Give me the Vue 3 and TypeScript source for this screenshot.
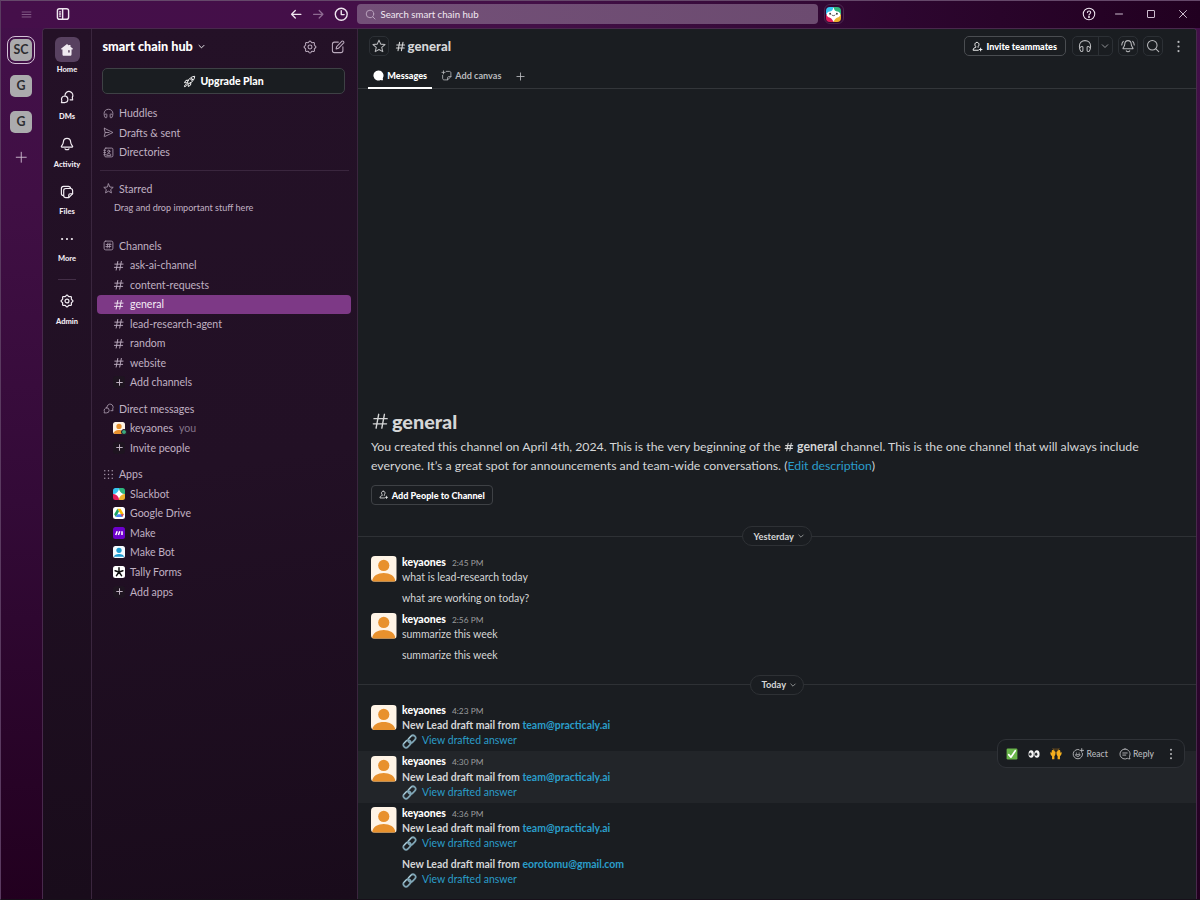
<script setup lang="ts">
import { h } from 'vue'
import type { FunctionalComponent } from 'vue'

/* Scalloped outline shared by both settings gears */
function gearPath(): string {
  const pts: string[] = []
  for (let i = 0; i <= 96; i++) {
    const a = (i / 96) * Math.PI * 2
    const r = 7.6 + 0.85 * Math.cos(a * 8)
    pts.push(`${(10 + r * Math.sin(a)).toFixed(2)} ${(10 - r * Math.cos(a)).toFixed(2)}`)
  }
  return 'M' + pts.join('L') + 'Z'
}

const palm = 'M.5 7.500c.8-.8 1.500-.2 1.900.8l.7-4.100c.3-1 1.500-.8 1.500.1l.1-1c.3-1 1.600-.7 1.600.3l.1.900c.4-.8 1.500-.5 1.500.4l.2 1.200c.5-.5 1.200-.1 1.200.7 0 4.200-.7 5.700-2 7v5H3.400v-5C1.700 12.500.4 10 .5 7.500Z'

const icons: Record<string, string> = {
  menu: '<path d="M2 5.500h16M2 10h16M2 14.500h16"/>',
  panel: '<rect x="2" y="2.500" width="16" height="15" rx="3"/><path d="M9.500 3v14" stroke-width="2"/><path d="M5 7h1.500M5 10h1.500M5 13h1.500"/>',
  back: '<path d="M17.5 10h-15M8.5 4 2.5 10l6 6"/>',
  forward: '<path d="M2.500 10h15M11.500 4l6 6-6 6"/>',
  clock: '<circle cx="10" cy="10" r="8.2"/><path d="M10 5v5.500h4"/>',
  search: '<circle cx="9" cy="9" r="6.800"/><path d="m14 14 4.200 4.200"/>',
  help: '<circle cx="10" cy="10" r="8.200"/><path d="M7.700 8c.2-3 4.800-2.900 4.700-.1 0 1.800-2.400 1.900-2.400 3.700"/><circle cx="10" cy="14.300" r=".6" fill="currentColor"/>',
  minimize: '<path d="M3 10h14"/>',
  maximize: '<rect x="3" y="3" width="14" height="14" rx="1"/>',
  close: '<path d="M3 3l14 14M17 3 3 17"/>',
  plus: '<path d="M10 2v16M2 10h16"/>',
  home: '<path d="M10 1.500 1.800 8c-.5.400-.2 1.300.4 1.300H3.500V16c0 1.400.8 2.200 2.200 2.200h8.600c1.400 0 2.200-.8 2.200-2.200V9.300h1.300c.6 0 .9-.9.400-1.300L15 5.400V3h-2.400v.6z" fill="currentColor" stroke="none"/><path d="M12.800 11v2" stroke="#4b3450" stroke-width="1.900"/>',
  dms: '<path d="M7.200 7.600a5.600 5.600 0 1 1 10.400 2.900l.5 3.500h-3.700"/><path d="M6.600 8.600a4.700 4.700 0 1 1-.1 9.400H2l.6-2.600a4.700 4.700 0 0 1 4-6.800Z"/>',
  bell: '<path d="M10 2c3.300 0 5 2.300 5.200 5.200.1 2.900 1.800 4.300 2.800 6.100.2.600 0 1.100-.6 1.100H2.600c-.6 0-.8-.5-.6-1.100 1-1.800 2.700-3.200 2.800-6.100C5 4.300 6.700 2 10 2Z"/><path d="M7.200 16.800c1.400 1.800 4.200 1.800 5.600 0"/>',
  files: '<path d="M5 15.200C3 15 2 14 2 12V5c0-2 1-3 3-3h7c2 0 3 1 3.200 3"/><path d="M8.300 5h6.700c2 0 3 1 3 3v4.500L12.500 18H8.300c-2 0-3-1-3-3V8c0-2 1-3 3-3Z"/><path d="M12.500 17.800v-3.300c0-1.300.7-2 2-2H18"/>',
  more: '<g fill="currentColor" stroke="none"><circle cx="3" cy="10" r="1.600"/><circle cx="10" cy="10" r="1.600"/><circle cx="17" cy="10" r="1.600"/></g>',
  kebab: '<g fill="currentColor" stroke="none"><circle cx="10" cy="3" r="1.700"/><circle cx="10" cy="10" r="1.700"/><circle cx="10" cy="17" r="1.700"/></g>',
  gear: `<path d="${gearPath()}"/><circle cx="10" cy="10" r="2.800"/>`,
  chevron: '<path d="m4.500 7.500 5.500 5.500 5.500-5.500"/>',
  compose: '<path d="M10.500 3H5C3 3 2 4 2 6v9c0 2 1 3 3 3h9c2 0 3-1 3-3V9.500"/><path d="m7.300 12.700.8-3.400L15.700 1.700c1.300-1 3.400 1 2.500 2.500l-7.600 7.600Z"/>',
  rocket: '<path d="M7 10.500C9 5.500 13 2.200 18 2c-.2 5-3.500 9-8.500 11Z"/><path d="M8 8 4.500 8.300 2.300 11.800l4.700.4M12 12l-.3 3.500-3.500 2.200-.5-4.700M5 14c-1.600.5-2.500 2-2.800 4 2-.3 3.500-1.200 4-2.800"/><circle cx="13.300" cy="6.700" r="1.300"/>',
  huddle: '<path d="M3.500 16.500C2.600 15 2 12.500 2 10.200 2 5.500 5.300 2.300 10 2.300s8 3.200 8 7.900c0 2.300-.6 4.800-1.500 6.300"/><path d="M3 12.500c1-2 4-2.500 4-.5v4.500c0 1.800-2.500 2-3.500.2M17 12.500c-1-2-4-2.500-4-.5v4.500c0 1.800 2.500 2 3.500.2"/>',
  send: '<path d="M3 2.500 18 10 3 17.500c-.7.200-1-.2-.8-.9L4 10 2.200 3.400c-.2-.7.100-1.100.8-.9Z"/><path d="M4 10h7"/>',
  directory: '<rect x="3" y="2" width="15" height="16" rx="2.200"/><circle cx="10.500" cy="7.800" r="2"/><path d="M6.800 14.500c.2-4.400 7.200-4.400 7.400 0Z"/><path d="M1.500 6h3M1.500 10h3M1.500 14h3"/>',
  star: '<path d="m10 1.600 2.500 5.700 6.100.6-4.700 4.100 1.500 6L10 14.900 4.600 18l1.500-6L1.400 7.900l6.100-.6Z"/>',
  hashbox: '<rect x="2" y="2" width="16" height="16" rx="3"/><path d="M9 5.500 7.500 14.500M12.800 5.500l-1.500 9M5.800 8.300h8.900M5.300 11.800h8.900"/>',
  hash: '<path d="M8.300 2.500 5.500 17.500M14.500 2.500l-2.800 15M3.200 7.200h14.300M2.500 12.800h14.300"/>',
  grid: '<g fill="currentColor" stroke="none"><rect x="2" y="2" width="2.300" height="2.300"/><rect x="8.850" y="2" width="2.300" height="2.300"/><rect x="15.700" y="2" width="2.300" height="2.300"/><rect x="2" y="8.850" width="2.300" height="2.300"/><rect x="8.850" y="8.850" width="2.300" height="2.300"/><rect x="15.700" y="8.850" width="2.300" height="2.300"/><rect x="2" y="15.700" width="2.300" height="2.300"/><rect x="8.850" y="15.700" width="2.300" height="2.300"/><rect x="15.700" y="15.700" width="2.300" height="2.300"/></g>',
  bubble: '<path d="M10 1a9 9 0 1 0 3.700 17.100c1.200.6 2.600.8 4.800.7-.6-1.400-.8-2.900-.6-4.300A9 9 0 0 0 10 1Z" fill="currentColor" stroke="none"/>',
  canvas: '<path d="M9.500 2.500H15c2 0 3 1 3 3V12l-6 6H6c-2 0-3-1-3-3v-5.500"/><path d="M12 17.800V14c0-1.300.7-2 2-2h4M4.500 1.500v5.500M1.700 4.300h5.600"/>',
  person: '<path d="M9 2.500c2.300 0 3.700 1.600 3.700 3.900 0 1.700-.7 3-1.600 3.800v1.300M9 2.500c-2.300 0-3.700 1.600-3.700 3.900 0 1.700.7 3 1.600 3.800v1.300C4.500 12.200 2 13 2 16.800h9.500M15.700 13v5M13.200 15.500h5"/>',
  alarm: '<path d="M10 2.300c3 0 4.400 2 4.600 4.800.1 2.700 1.500 4.100 2.500 6 .2.500 0 .9-.6.900h-13c-.6 0-.8-.4-.6-.9 1-1.900 2.400-3.300 2.500-6C5.600 4.300 7 2.300 10 2.300ZM7.500 17c1.200 1.500 3.800 1.500 5 0M3.300 3.300C1.900 4.700 1.200 6.500 1.100 8.500M16.700 3.300c1.400 1.400 2.100 3.200 2.200 5.200"/>',
  react: '<path d="M11.500 2.600a7.800 7.800 0 1 0 6 6.400"/><path d="M6 11.800c1.300 3.400 6 3.400 7.300 0ZM16.200 1v6M13.200 4h6"/><g fill="currentColor" stroke="none"><circle cx="7.300" cy="8.500" r="1"/><circle cx="11.900" cy="8.500" r="1"/></g>',
  reply: '<path d="M10 1.700a8.300 8.300 0 1 0 4 15.500c1 .6 2.300.9 4.300.8-.7-1.500-1-2.700-.7-4.300A8.300 8.300 0 0 0 10 1.700Z"/><path d="M6.300 8.300h7.400M6.300 11.800h5"/>',
  link: '<g transform="rotate(-45 10 10)"><g fill="none" stroke="#7fa5b5" stroke-width="2.300"><rect x="0" y="6.500" width="11" height="7" rx="3.500"/><rect x="9" y="6.500" width="11" height="7" rx="3.500"/></g><path d="M3 6.300h5M12 6.300h5" stroke="#c9dde5" stroke-width="1"/></g>',
  check: '<rect x="1" y="1" width="18" height="18" rx="2" fill="#69b54a" stroke="none"/><path d="m4.500 11 3.700 4.300L15.500 4.500" stroke="#fff" stroke-width="2.800"/>',
  eyes: '<g stroke="none"><ellipse cx="5.300" cy="10" rx="4.400" ry="6.300" fill="#f5f5f5"/><ellipse cx="14.900" cy="10" rx="4.400" ry="6.300" fill="#f5f5f5"/><ellipse cx="4" cy="10.300" rx="2" ry="2.800" fill="#26292d"/><ellipse cx="13.600" cy="10.300" rx="2" ry="2.800" fill="#26292d"/></g>',
  hands: `<path d="M8.300 3.500V1.200M11.700 3.500V1.200M5.800 2 5 .8M14.200 2l.8-1.200" stroke="#b87a1c" stroke-width="1"/><g stroke="none" fill="#f4ae1d"><path d="${palm}"/><path transform="matrix(-1 0 0 1 20 0)" d="${palm}"/></g>`,
  user: '<g stroke="none"><rect width="20" height="20" fill="#fff4e6"/><circle cx="10" cy="7.400" r="4.400" fill="#e8912d"/><path d="M.9 20c.3-8.800 17.900-8.800 18.200 0Z" fill="#e8912d"/></g>',
  makebot: '<g stroke="none"><rect width="20" height="20" fill="#f4fbff"/><circle cx="10" cy="7.200" r="4.400" fill="#1c9bd1"/><path d="M1.500 18c0-6.500 17-6.500 17 0Z" fill="#1c9bd1"/></g>',
  slackbot: '<g stroke="none"><path d="M0 0h10v10H0z" fill="#36c5f0"/><path d="M10 0h10v10H10z" fill="#2eb67d"/><path d="M0 10h10v10H0z" fill="#e01e5a"/><path d="M10 10h10v10H10z" fill="#ecb22e"/><path d="M10 1.500c1 4.500 3.800 7.300 8.500 8.500-4.700 1.200-7.500 4-8.500 8.500C9 14 6.200 11.200 1.500 10 6.200 8.800 9 6 10 1.500Z" fill="#fff"/></g>',
  slackface: '<g stroke="none"><path d="M0 0h10v10H0z" fill="#36c5f0"/><path d="M10 0h10v10H10z" fill="#2eb67d"/><path d="M0 10h10v10H0z" fill="#e01e5a"/><path d="M10 10h10v10H10z" fill="#ecb22e"/><path d="M10 0c.8 3 1.600 5.300 3.500 5.800C16 6 17.500 6.500 19 8.800v2.400c-1.500 2.200-3 2.600-5 3.300-2 1-3 3-4 5.500-1-2.500-2-4.500-4-5.500-2-.7-3.500-1.100-5-3.300V8.800C2.500 6.500 4 6 6.500 5.800 8.400 5.300 9.200 3 10 0Z" fill="#fff"/><circle cx="5.500" cy="9" r="1.200" fill="#333"/><circle cx="14.500" cy="9" r="1.200" fill="#333"/></g><path d="M8 10.800c1 1.100 3 1.100 4 0" stroke="#333" stroke-width="1.100"/>',
  drive: '<g stroke="none"><rect width="20" height="20" fill="#fff"/><path d="M7.300 3h5.400l5.300 9h-5Z" fill="#fbbc04"/><path d="M7.300 3 2 12l2.700 4.700L10 7.500Z" fill="#1ea362"/><path d="M7.300 12H18l-2.700 4.700H4.700Z" fill="#4285f4"/><path d="m15.300 16.700 2.700-4.700h-5Z" fill="#ea4335"/></g>',
  make: '<rect width="20" height="20" fill="#6d00cc" stroke="none"/><path d="M4.500 13.500 7 7M9 13.500 11.300 7M15 13.500V7" stroke="#fff" stroke-width="2.500" stroke-linecap="butt"/>',
  tally: '<rect width="20" height="20" fill="#fff" stroke="none"/><path d="M10 10V3M10 10l6.500-2.200M10 10l4.200 6M10 10l-4.200 6M10 10 3.500 7.800" stroke="#111" stroke-width="2.500"/>',
}

const Icon: FunctionalComponent<{ name: string }> = (props) =>
  h('svg', { viewBox: '0 0 20 20', 'aria-hidden': 'true', innerHTML: icons[props.name] })
Icon.props = ['name']

interface NavItem { label: string; icon: string; active?: boolean }
const navItems: NavItem[] = [
  { label: 'Home', icon: 'home', active: true },
  { label: 'DMs', icon: 'dms' },
  { label: 'Activity', icon: 'bell' },
  { label: 'Files', icon: 'files' },
  { label: 'More', icon: 'more' },
]

interface Entry { label: string; icon: string; kind: 'glyph' | 'add' | 'tile'; active?: boolean; you?: boolean }
interface Section { title: string; icon: string; key: string; entries: Entry[] }

const shortcuts = [
  { label: 'Huddles', icon: 'huddle' },
  { label: 'Drafts & sent', icon: 'send' },
  { label: 'Directories', icon: 'directory' },
]

const channels = ['ask-ai-channel', 'content-requests', 'general', 'lead-research-agent', 'random', 'website']
const sections: Section[] = [
  {
    title: 'Channels', icon: 'hashbox', key: 'channels',
    entries: [
      ...channels.map((label): Entry => ({ label, icon: 'hash', kind: 'glyph', active: label === 'general' })),
      { label: 'Add channels', icon: 'plus', kind: 'add' },
    ],
  },
  {
    title: 'Direct messages', icon: 'dms', key: 'dms',
    entries: [
      { label: 'keyaones', icon: 'user', kind: 'tile', you: true },
      { label: 'Invite people', icon: 'plus', kind: 'add' },
    ],
  },
  {
    title: 'Apps', icon: 'grid', key: 'apps',
    entries: [
      { label: 'Slackbot', icon: 'slackbot', kind: 'tile' },
      { label: 'Google Drive', icon: 'drive', kind: 'tile' },
      { label: 'Make', icon: 'make', kind: 'tile' },
      { label: 'Make Bot', icon: 'makebot', kind: 'tile' },
      { label: 'Tally Forms', icon: 'tally', kind: 'tile' },
      { label: 'Add apps', icon: 'plus', kind: 'add' },
    ],
  },
]

interface Message { id: number; time?: string; text?: string; lead?: string; hovered?: boolean }
interface Day { label: string; messages: Message[] }
const days: Day[] = [
  {
    label: 'Yesterday',
    messages: [
      { id: 1, time: '2:45 PM', text: 'what is lead-research today' },
      { id: 2, text: 'what are working on today?' },
      { id: 3, time: '2:56 PM', text: 'summarize this week' },
      { id: 4, text: 'summarize this week' },
    ],
  },
  {
    label: 'Today',
    messages: [
      { id: 5, time: '4:23 PM', lead: 'team@practicaly.ai' },
      { id: 6, time: '4:30 PM', lead: 'team@practicaly.ai', hovered: true },
      { id: 7, time: '4:36 PM', lead: 'team@practicaly.ai' },
      { id: 8, lead: 'eorotomu@gmail.com' },
    ],
  },
]
</script>

<template>
  <div class="window">
    <header class="titlebar">
      <div class="tb-left">
        <Icon name="menu" class="i-menu" />
        <Icon name="panel" class="i-panel" />
      </div>
      <div class="tb-history">
        <Icon name="back" class="i-arrow" />
        <Icon name="forward" class="i-arrow dim" />
        <Icon name="clock" class="i-clock" />
      </div>
      <div class="searchbar"><Icon name="search" class="i-search" /><span>Search smart chain hub</span></div>
      <div class="bot"><Icon name="slackface" class="i-bot" /></div>
      <div class="tb-right">
        <Icon name="help" class="i-help" />
        <Icon name="minimize" class="i-win" />
        <Icon name="maximize" class="i-win" />
        <Icon name="close" class="i-win" />
      </div>
    </header>

    <div class="body">
      <aside class="workspaces">
        <div class="ws current"><span>SC</span></div>
        <div class="ws"><span>G</span></div>
        <div class="ws"><span>G</span></div>
        <Icon name="plus" class="i-addws" />
      </aside>

      <div class="client">
        <nav class="nav">
          <div v-for="item in navItems" :key="item.label" class="nav-item" :class="{ active: item.active }">
            <div class="nav-icon"><Icon :name="item.icon" class="i-nav" /></div>
            <span>{{ item.label }}</span>
          </div>
          <hr class="nav-rule" />
          <div class="nav-item">
            <div class="nav-icon"><Icon name="gear" class="i-nav" /></div>
            <span>Admin</span>
          </div>
        </nav>

        <aside class="sidebar">
          <div class="side-head">
            <strong>smart chain hub</strong>
            <Icon name="chevron" class="i-chev" />
            <Icon name="gear" class="i-head push" />
            <Icon name="compose" class="i-head" />
          </div>
          <button class="upgrade"><Icon name="rocket" class="i-rocket" />Upgrade Plan</button>
          <div class="shortcuts">
            <div v-for="s in shortcuts" :key="s.label" class="row top"><Icon :name="s.icon" class="i-row" /><span>{{ s.label }}</span></div>
          </div>
          <div class="starred">
            <div class="row top"><Icon name="star" class="i-row" /><span>Starred</span></div>
            <p>Drag and drop important stuff here</p>
          </div>
          <section v-for="sec in sections" :key="sec.key" class="section">
            <div class="row top"><Icon :name="sec.icon" class="i-row" /><span>{{ sec.title }}</span></div>
            <div v-for="e in sec.entries" :key="e.label" class="row entry" :class="{ active: e.active }">
              <span class="slot" :class="e.kind">
                <Icon :name="e.icon" />
                <i v-if="e.you" class="presence"></i>
              </span>
              <span>{{ e.label }}</span>
              <span v-if="e.you" class="you">you</span>
            </div>
          </section>
        </aside>

        <main class="main">
          <div class="chan-head">
            <div class="sq star"><Icon name="star" class="i-sq" /></div>
            <h1><Icon name="hash" class="i-hash" />general</h1>
            <div class="actions">
              <button class="invite"><Icon name="person" class="i-person" />Invite teammates</button>
              <div class="split">
                <span><Icon name="huddle" class="i-sq" /></span>
                <span><Icon name="chevron" class="i-split" /></span>
              </div>
              <div class="sq"><Icon name="alarm" class="i-sq" /></div>
              <div class="sq last"><Icon name="search" class="i-sq" /></div>
              <Icon name="kebab" class="i-kebab" />
            </div>
          </div>
          <div class="tabs">
            <div class="tab on"><Icon name="bubble" class="i-tab" />Messages</div>
            <div class="tab"><Icon name="canvas" class="i-tab" />Add canvas</div>
            <Icon name="plus" class="i-plus" />
          </div>

          <div class="stream">
            <div class="intro">
              <h2><Icon name="hash" class="i-bighash" />general</h2>
              <p>You created this channel on April 4th, 2024. This is the very beginning of the <b><Icon name="hash" class="i-inhash" /> general</b> channel. This is the one channel that will always include<br />everyone. It’s a great spot for announcements and team-wide conversations. (<a>Edit description</a>)</p>
              <button><Icon name="person" class="i-addperson" />Add People to Channel</button>
            </div>

            <section v-for="day in days" :key="day.label" class="day">
              <div class="divider"><span>{{ day.label }}<Icon name="chevron" class="i-day" /></span></div>
              <article v-for="m in day.messages" :key="m.id" class="msg" :class="{ hovered: m.hovered }">
                <div class="gutter"><Icon v-if="m.time" name="user" class="avatar" /></div>
                <div class="content">
                  <div v-if="m.time" class="line"><b class="author">keyaones</b><time>{{ m.time }}</time></div>
                  <div v-if="m.text" class="line">{{ m.text }}</div>
                  <template v-if="m.lead">
                    <div class="line"><b>New Lead draft mail from <a>{{ m.lead }}</a></b></div>
                    <div class="line linkline"><Icon name="link" class="i-link" /><a>View drafted answer</a></div>
                  </template>
                </div>
                <div v-if="m.hovered" class="toolbar">
                  <Icon name="check" class="i-emoji" />
                  <Icon name="eyes" class="i-emoji" />
                  <Icon name="hands" class="i-emoji" />
                  <span class="act react"><Icon name="react" class="i-act" />React</span>
                  <span class="act"><Icon name="reply" class="i-act" />Reply</span>
                  <Icon name="kebab" class="i-tbkebab" />
                </div>
              </article>
            </section>
          </div>
        </main>
      </div>
    </div>
  </div>
</template>

<style>
html, body { margin: 0; background: #1a1d21; overflow: hidden; }
</style>

<style scoped>
* { box-sizing: border-box; }
svg { display: block; flex: none; fill: none; stroke: currentColor; stroke-width: 1.5; stroke-linecap: round; stroke-linejoin: round; }
button { font: inherit; color: inherit; margin: 0; padding: 0; display: flex; align-items: center; justify-content: center; }
h1, h2, p { margin: 0; }
a { color: #2a9dca; }

.window {
  width: 1200px; height: 900px; overflow: hidden; display: flex; flex-direction: column;
  font-family: Lato, "Liberation Sans", sans-serif; font-size: 10.5px; color: #d5d6d7;
  background: linear-gradient(180deg, #43104a 0, #400f44 200px, #330a37 500px, #22001f 900px);
  border-top: 1px solid #65486a; border-left: 1px solid #5a3a60; border-bottom: 1px solid #17101a;
}
.titlebar {
  height: 27px; flex: none; display: flex; align-items: center; padding-bottom: 1px;
  background: linear-gradient(90deg, #450f4a 0, #430f47 45%, #2d062f 75%, #210020 100%);
}
.tb-left { display: flex; align-items: center; width: 289px; padding-left: 20px; gap: 24px; }
.i-menu { width: 11px; height: 11px; color: #8e6a92; }
.i-panel { width: 14px; height: 14px; color: #efe6f0; stroke-width: 2; }
.tb-history { display: flex; align-items: center; gap: 9.5px; }
.i-arrow { width: 12.5px; height: 12.5px; color: #efe6f0; stroke-width: 2; }
.dim { color: #8e6a92; }
.i-clock { width: 14.5px; height: 14.5px; color: #efe6f0; stroke-width: 1.9; }
.searchbar {
  margin-left: 8px; width: 461px; height: 20px; border-radius: 4px; background: linear-gradient(90deg, #735078, #6c4b70);
  display: flex; align-items: center; gap: 5px; padding-left: 8px; color: #f1e9f2; font-size: 9.65px;
}
.i-search { width: 11px; height: 11px; color: #b9a2bc; stroke-width: 1.8; }
.bot { margin-left: 6px; width: 20px; height: 20px; border-radius: 6px; border: 1px solid #4c2750; display: grid; place-items: center; }
.i-bot { width: 15px; height: 15px; border-radius: 4px; }
.tb-right { margin-left: auto; display: flex; align-items: center; gap: 22px; padding-right: 12px; color: #cdbdcf; }
.i-help { width: 14px; height: 14px; color: #efe6f0; margin-right: -4px; }
.i-win { width: 10px; height: 10px; stroke-width: 2; }

.body { flex: 1; min-height: 0; display: flex; }
.workspaces { width: 41px; flex: none; display: flex; flex-direction: column; align-items: center; padding: 10.5px 1px 0 0; gap: 14px; }
.ws span { width: 22px; height: 22px; border-radius: 5px; background: #ababad; color: #2c2d30; display: grid; place-items: center; font-weight: 700; font-size: 12.4px; }
.ws.current { margin: -3px 0; padding: 2px; border: 1px solid #d3c0d6; border-radius: 8px; }
.i-addws { width: 12.5px; height: 12.5px; margin-top: 4.5px; color: #cbb9cd; }

.client { flex: 1; min-width: 0; display: flex; margin-right: 3px; border: 1px solid #48294c; border-width: 1px 1px 0 1px; border-radius: 4px 4px 0 0; overflow: hidden; background: #1a1d21; }
.nav { width: 49px; flex: none; background: linear-gradient(180deg, #241127 0, #211024 400px, #190c1b 100%); border-right: 1px solid #3a263e; display: flex; flex-direction: column; align-items: center; padding-top: 8px; color: #f0eaf1; }
.nav-item { height: 47.4px; display: flex; flex-direction: column; align-items: center; font-size: 7.5px; font-weight: 900; line-height: 10px; }
.nav-icon { width: 25px; height: 25px; border-radius: 6px; display: grid; place-items: center; margin-bottom: 2.8px; }
.active .nav-icon { background: #584160; }
.i-nav { width: 14px; height: 14px; stroke-width: 1.7; }
.nav-rule { width: 18px; height: 1px; border: 0; margin: 5.5px 0 8.5px; background: #432e47; }

.sidebar { width: 266px; flex: none; background: linear-gradient(172deg, #241127 0, #221025 50%, #190b1b 100%); border-right: 1px solid #3a263e; padding: 0 6px 0 5px; color: #c0b1c3; }
.side-head { height: 35px; display: flex; align-items: center; padding: 0 6px 0 5.5px; color: #fff; font-size: 12.7px; }
.side-head strong { font-weight: 900; margin-top: -1px; }
.i-chev { width: 9px; height: 9px; margin-left: 4px; stroke-width: 2; }
.i-head { width: 14px; height: 14px; color: #b9a9bc; margin-left: 14px; }
.i-head.push { margin-left: auto; }
.upgrade { margin: 4px 5px 0; width: 243px; height: 26px; background: #1a1d21; border: 1px solid #3e4145; border-radius: 5px; color: #fff; font-weight: 900; font-size: 10.5px; gap: 4px; }
.i-rocket { width: 13px; height: 13px; }
.shortcuts { padding-top: 9.5px; height: 77px; border-bottom: 1px solid #3a263e; margin: 0 2px 8px 3px; }
.shortcuts .row { margin-left: -3px; }
.row { height: 19.52px; display: flex; align-items: center; font-size: 10.55px; border-radius: 4px; white-space: nowrap; }
.row.top { padding-left: 5.5px; gap: 5.5px; }
.i-row { width: 11px; height: 11px; stroke-width: 1.6; color: #a797ab; }
.starred { height: 57px; }
.starred p { padding-left: 17px; line-height: 18px; font-size: 9.1px; }
.section { margin-bottom: 7px; }
.entry { padding-left: 16px; }
.slot { position: relative; width: 12px; height: 12px; margin-right: 5px; display: grid; place-items: center; }
.slot svg { width: 11.5px; height: 11.5px; stroke-width: 1.6; }
.slot.add { background: #1e1420; border-radius: 3px; }
.slot.add svg { width: 7px; height: 7px; stroke-width: 2.8; color: #c3b5c5; }
.slot.tile svg { width: 12px; height: 12px; border-radius: 2.5px; }
.presence { position: absolute; right: -2px; bottom: -1px; width: 6px; height: 6px; border-radius: 50%; background: #3daa7c; border: 1px solid #231126; }
.you { margin-left: 6px; color: #84748a; }
.entry.active { background: #7d3986; color: #f5ecf6; }

.main { flex: 1; min-width: 0; display: flex; flex-direction: column; background: #1a1d21; }
.chan-head { height: 34px; flex: none; display: flex; align-items: center; padding-left: 11px; }
.sq { width: 20px; height: 20px; border: 1px solid #2c3035; border-radius: 5px; display: grid; place-items: center; color: #b9babd; }
.i-sq { width: 14px; height: 14px; }
.chan-head h1 { margin-left: 6px; display: flex; align-items: center; gap: 1.5px; font-size: 13.2px; font-weight: 900; }
.i-hash { width: 11px; height: 11px; stroke-width: 2; }
.actions { margin-left: auto; display: flex; align-items: center; padding-right: 11px; color: #b9babd; }
.invite { width: 102px; height: 20px; background: #1a1d21; border: 1px solid #4a4d51; border-radius: 5px; color: #fff; font-size: 9.1px; font-weight: 900; gap: 3.5px; }
.i-person { width: 11px; height: 11px; stroke-width: 1.7; }
.split { margin: 0 5px 0 6px; height: 20px; border: 1px solid #2c3035; border-radius: 5px; display: flex; }
.split span { width: 25px; display: grid; place-items: center; }
.split span + span { width: 14px; border-left: 1px solid #2c3035; }
.i-split { width: 10px; height: 10px; }
.sq.last { margin: 0 9.5px 0 5px; }
.i-kebab { width: 13px; height: 13px; }
.tabs { height: 26px; flex: none; display: flex; align-items: stretch; padding-left: 10px; border-bottom: 1px solid #33363a; color: #b9babd; }
.tab { display: flex; align-items: center; gap: 3.3px; font-size: 9.1px; font-weight: 700; padding: 0 5px; margin-right: 4px; }
.tab.on { color: #fff; font-weight: 900; border-bottom: 1px solid #fff; margin-bottom: -1px; box-shadow: inset 0 -1px #fff; }
.i-tab { width: 11px; height: 11px; }
.i-plus { width: 9px; height: 9px; margin: 8.5px 0 0 5.5px; stroke-width: 1.9; }

.stream { flex: 1; display: flex; flex-direction: column; min-height: 0; justify-content: flex-end; padding-bottom: 8.8px; }
.intro { padding: 0 13px; height: 109.5px; flex: none; }
.intro h2 { display: flex; align-items: center; gap: 2.5px; font-size: 19.8px; line-height: 24px; font-weight: 900; height: 27px; }
.i-bighash { width: 18.5px; height: 18.5px; stroke-width: 1.5; }
.intro p { margin-top: 1.8px; font-size: 12.31px; line-height: 19px; white-space: nowrap; }
.i-inhash { display: inline-block; width: 10px; height: 10px; stroke-width: 2.2; vertical-align: -1px; }
.intro button { margin-top: 10.5px; width: 122px; height: 20px; background: none; border: 1px solid #3e4145; border-radius: 4px; font-size: 9.1px; font-weight: 900; color: #fff; gap: 3px; }
.i-addperson { width: 9.5px; height: 9.5px; }
.day { flex: none; }
.divider { height: 34px; display: flex; align-items: center; padding-top: 4px; }
.divider::before, .divider::after { content: ""; flex: 1; height: 1px; background: #2e3135; }
.divider span { height: 20px; padding: 0 6px 0 10.5px; border: 1px solid #2e3135; border-radius: 10px; display: flex; align-items: center; gap: 3px; font-size: 9.3px; font-weight: 700; }
.i-day { width: 8px; height: 8px; }
.msg { position: relative; display: flex; padding: 3.3px 13px 2.55px; }
.gutter { width: 25px; margin-right: 6px; flex: none; height: 15px; }
.avatar { width: 25.5px; height: 25.5px; border-radius: 4px; margin-top: 1.6px; }
.line { height: 15.2px; line-height: 15.2px; font-size: 10.48px; white-space: nowrap; }
.author { color: #fff; font-weight: 900; }
time { margin-left: 6px; font-size: 8.35px; color: #9b9c9e; }
.linkline { display: flex; align-items: center; gap: 5px; }
.i-link { width: 15px; height: 15px; }
.hovered { background: #222529; }
.toolbar { position: absolute; z-index: 2; right: 11px; top: -12px; width: 188px; height: 29px; border: 1px solid #2f3237; border-radius: 9px; background: #1a1d21; display: flex; align-items: center; padding-left: 7.5px; color: #b9babd; }
.i-emoji { width: 12px; height: 12px; margin-right: 10.3px; }
.act { display: flex; align-items: center; gap: 2.2px; font-size: 8.6px; font-weight: 500; }
.react { margin-right: 11px; }
.i-act { width: 12px; height: 12px; }
.i-tbkebab { width: 12px; height: 12px; margin-left: 10.5px; }
</style>
